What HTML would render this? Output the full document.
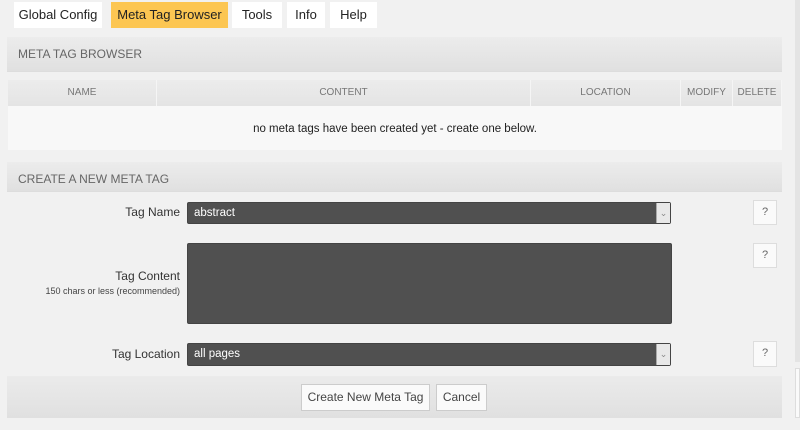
<!DOCTYPE html>
<html><head><style>
*{box-sizing:border-box;margin:0;padding:0}
body{width:800px;height:430px;background:#f1f1f1;font-family:"Liberation Sans",sans-serif;position:relative;overflow:hidden;color:#333}
.a{position:absolute}
.tab{position:absolute;top:2px;height:26px;background:#fff;font-size:13px;line-height:26px;text-align:center;color:#222}
.hdr{background:linear-gradient(#ececec,#e0e0e0);border-bottom:1px solid #ddd;font-size:12px;color:#666;padding-left:11px}
.th{position:absolute;top:80px;height:26px;line-height:26px;font-size:10px;color:#777;text-align:center;background:linear-gradient(#ececec,#e4e4e4);border-right:1px solid #f5f5f5}
.lbl{position:absolute;right:620px;font-size:12px;color:#333;text-align:right}
.sel{position:absolute;left:187px;width:484px;background:#505050;border:1px solid #444;border-radius:2px;color:#fff;font-size:11.5px;padding-left:6px}
.arr{position:absolute;right:0;top:0;bottom:0;width:14px;background:#e8e8e8;border-left:1px solid #aaa;color:#888;font-size:9px;text-align:center}
.q{position:absolute;left:753px;width:24px;height:25px;background:#fafafa;border:1px solid #ddd;font-size:11px;color:#666;text-align:center;line-height:23px}
.btn{position:absolute;top:384px;height:27px;background:#fafafa;border:1px solid #ccc;font-size:12px;line-height:25px;text-align:center;color:#444}
</style></head><body>
<div class="tab" style="left:14px;width:88px">Global Config</div>
<div class="tab" style="left:111px;width:117px;background:#fcc652">Meta Tag Browser</div>
<div class="tab" style="left:232px;width:50px">Tools</div>
<div class="tab" style="left:287px;width:38px">Info</div>
<div class="tab" style="left:330px;width:47px">Help</div>

<div class="a hdr" style="left:7px;top:37px;width:775px;height:35px;line-height:35px">META TAG BROWSER</div>
<div class="th" style="left:8px;width:149px">NAME</div>
<div class="th" style="left:157px;width:374px">CONTENT</div>
<div class="th" style="left:531px;width:150px">LOCATION</div>
<div class="th" style="left:681px;width:52px">MODIFY</div>
<div class="th" style="left:733px;width:49px">DELETE</div>
<div class="a" style="left:8px;top:106px;width:774px;height:44px;background:#f8f8f8;font-size:11.5px;text-align:center;line-height:46px;color:#222">no meta tags have been created yet - create one below.</div>

<div class="a hdr" style="left:7px;top:162px;width:775px;height:30px;line-height:34px">CREATE A NEW META TAG</div>

<div class="lbl" style="top:205px">Tag Name</div>
<div class="sel" style="top:202px;height:22px;line-height:20px">abstract<div class="arr">⌄</div></div>
<div class="q" style="top:200px">?</div>

<div class="lbl" style="top:269px">Tag Content</div>
<div class="lbl" style="top:286px;font-size:9px;color:#444">150 chars or less (recommended)</div>
<div class="a" style="left:187px;top:243px;width:485px;height:81px;background:#505050;border:1px solid #444;border-radius:2px"></div>
<div class="q" style="top:243px">?</div>

<div class="lbl" style="top:347px">Tag Location</div>
<div class="sel" style="top:343px;height:23px;line-height:21px">all pages<div class="arr">⌄</div></div>
<div class="q" style="top:341px;height:26px">?</div>

<div class="a" style="left:7px;top:376px;width:775px;height:42px;background:linear-gradient(#ebebeb,#e0e0e0)"></div>
<div class="btn" style="left:301px;width:129px">Create New Meta Tag</div>
<div class="btn" style="left:436px;width:51px">Cancel</div>
<div class="a" style="left:795px;top:0;width:5px;height:362px;background:#e4e4e4"></div>
<div class="a" style="left:795px;top:368px;width:5px;height:50px;background:#fafafa;border:1px solid #ddd"></div>
</body></html>
